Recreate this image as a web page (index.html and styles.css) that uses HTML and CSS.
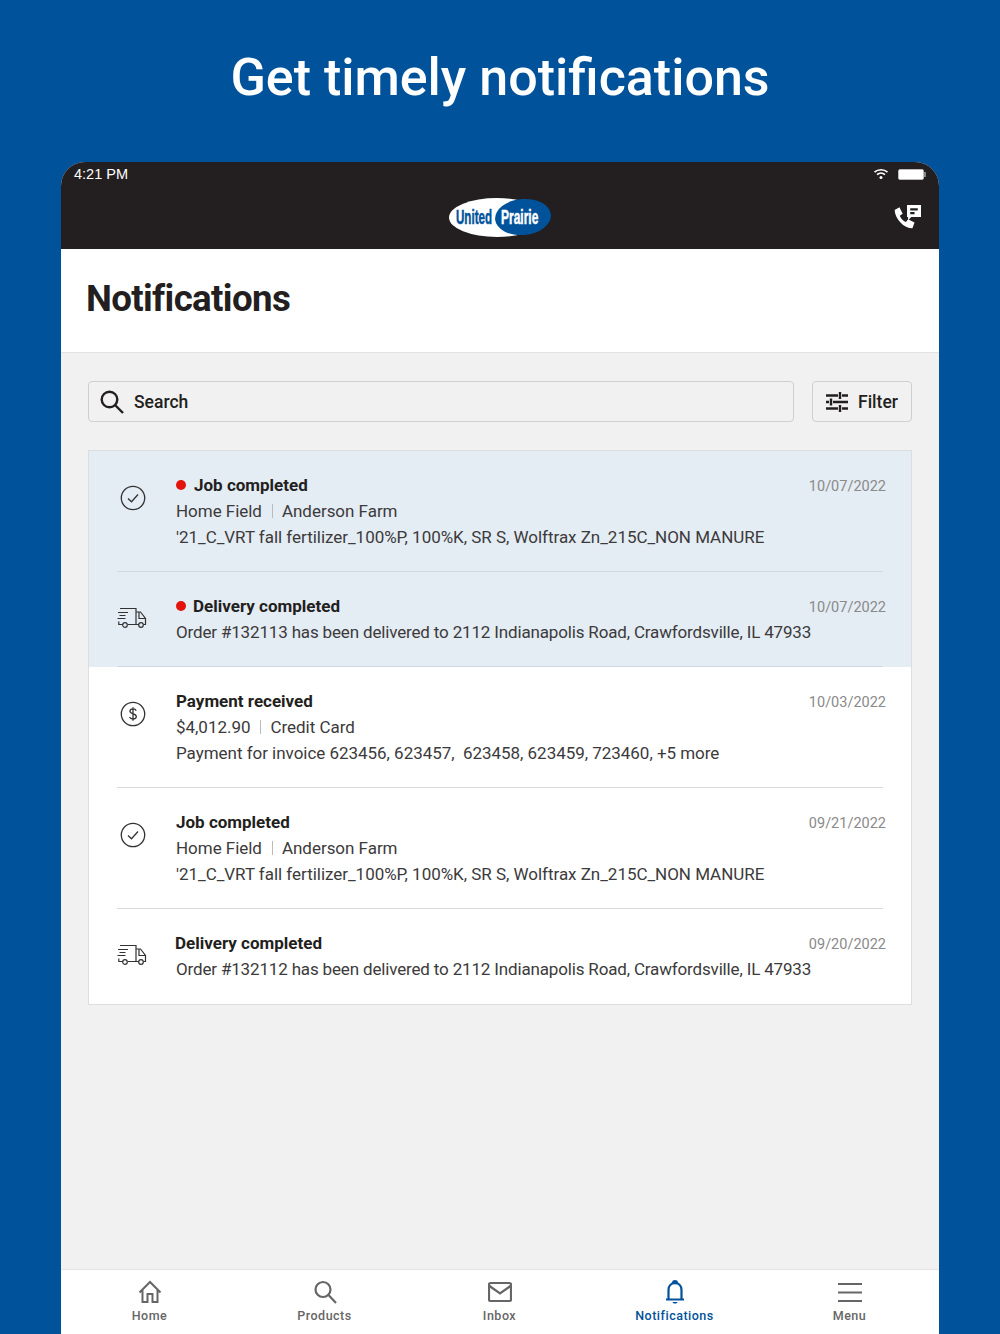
FILE: index.html
```html
<!DOCTYPE html>
<html lang="en">
<head>
    <meta charset="UTF-8">
    <meta name="viewport" content="width=device-width, initial-scale=1.0">
    <title>Notifications</title>
    <link rel="stylesheet" href="styles.css">
</head>
<body>
    <h1 class="headline">Get timely notifications</h1>
    <div class="tablet">
        <header class="topbar">
            <div class="status">
                <span class="time">4:21 PM</span>
                <div class="status-icons">
                    <svg class="wifi" width="16" height="12" viewBox="0 0 16 12" fill="none" stroke="#fff">
                        <path d="M1.5 4.2C5 .9 11 .9 14.5 4.2" stroke-width="1.6"/>
                        <path d="M4 6.6c2.3-2 5.7-2 8 0" stroke-width="1.6"/>
                        <circle cx="8" cy="9.6" r="1.5" fill="#fff" stroke="none"/>
                    </svg>
                    <div class="battery"></div>
                </div>
            </div>
            <div class="brandrow">
                <svg class="logo" width="104" height="42" viewBox="0 0 104 42">
                    <ellipse cx="49" cy="21.500" rx="48" ry="19.500" fill="#fff"/>
                    <ellipse cx="75" cy="21" rx="28" ry="18" fill="#00529b" transform="rotate(-5 75 21)"/>
                    <text transform="translate(8 28) scale(.58 1)" class="logo-text logo-blue">United</text>
                    <text transform="translate(53 28) scale(.6 1)" class="logo-text logo-white">Prairie</text>
                </svg>
                <svg class="contact" width="28" height="26" viewBox="1 1 26 24" fill="#fff">
                    <path d="M2.500 5.500 7 3l3 6-2.700 2c1 2.800 3 4.800 5.700 5.800l2-2.600 6 3-2 5.300C11 22.500 3 14 2.500 5.500z"/>
                    <path fill-rule="evenodd" d="M14 1h13v11H18l-3 3v-3h-1zM17 4v2h7V4zM17 7.500v2h4v-2z"/>
                </svg>
            </div>
        </header>

        <section class="title-band">
            <h2>Notifications</h2>
        </section>

        <main class="content">
            <div class="toolbar">
                <div class="search">
                    <svg width="26" height="26" viewBox="0 0 26 26" fill="none" stroke="#231f20" stroke-width="2.400">
                        <circle cx="10.500" cy="10.500" r="7.800"/>
                        <path d="M16 16l8 8"/>
                    </svg>
                    <span>Search</span>
                </div>
                <div class="filter">
                    <svg width="22" height="20" viewBox="0 0 22 20" fill="none" stroke="#231f20" stroke-width="2.400">
                        <path d="M0 3.500h12M16 3.500h6M14 0v7M0 10h3M7 10h15M5 6.500v7M0 16.500h12M16 16.500h6M14 13v7"/>
                    </svg>
                    <span>Filter</span>
                </div>
            </div>

            <div class="list">
                <div class="row row-new row-tall">
                    <div class="row-icon">
                        <svg class="ic" width="26" height="26" viewBox="0 0 26 26" fill="none" stroke="#333" stroke-width="1.300">
                            <circle cx="13" cy="13" r="11.700"/>
                            <path d="M8 13.500l3.500 3.300 6.500-7.300"/>
                        </svg>
                    </div>
                    <div class="row-body">
                        <div class="row-title"><i class="dot"></i>Job completed</div>
                        <div class="row-text">Home Field<span class="sep"></span>Anderson Farm</div>
                        <div class="row-text">'21_C_VRT fall fertilizer_100%P, 100%K, SR S, Wolftrax Zn_215C_NON MANURE</div>
                    </div>
                    <div class="row-date">10/07/2022</div>
                </div>
                <div class="row row-new row-delivery">
                    <div class="row-icon">
                        <svg class="ic ic-truck" width="30" height="22" viewBox="0 0 30 22" fill="none" stroke="#333" stroke-width="1.200">
                            <path d="M3 1.500h16v15.500M6 17.500H1.800v-3M11 17.500h11M19 5h4.500l5 6.500v6h-2"/>
                            <path d="M22 5v6.500h6.500M1 5.500h10M2.500 8.500h6M0.500 11.500h8"/>
                            <circle cx="8" cy="18" r="2.300"/>
                            <circle cx="24" cy="18" r="2.300"/>
                        </svg>
                    </div>
                    <div class="row-body">
                        <div class="row-title"><i class="dot"></i>Delivery completed</div>
                        <div class="row-text">Order #132113 has been delivered to 2112 Indianapolis Road, Crawfordsville, IL 47933</div>
                    </div>
                    <div class="row-date">10/07/2022</div>
                </div>
                <div class="row row-tall">
                    <div class="row-icon">
                        <svg class="ic" width="26" height="26" viewBox="0 0 26 26" fill="none" stroke="#333" stroke-width="1.300">
                            <circle cx="13" cy="13" r="11.700"/>
                            <path d="M16.200 9.800c-.5-1.300-1.600-1.900-3.200-1.900-1.800 0-3 .9-3 2.400 0 3.300 6.300 1.700 6.300 5.200 0 1.600-1.400 2.500-3.300 2.500-1.600 0-2.900-.7-3.400-2M13 6.300v13.400"/>
                        </svg>
                    </div>
                    <div class="row-body">
                        <div class="row-title">Payment received</div>
                        <div class="row-text">$4,012.90<span class="sep"></span>Credit Card</div>
                        <div class="row-text">Payment for invoice 623456, 623457,&nbsp; 623458, 623459, 723460, +5 more</div>
                    </div>
                    <div class="row-date">10/03/2022</div>
                </div>
                <div class="row row-tall">
                    <div class="row-icon">
                        <svg class="ic" width="26" height="26" viewBox="0 0 26 26" fill="none" stroke="#333" stroke-width="1.300">
                            <circle cx="13" cy="13" r="11.700"/>
                            <path d="M8 13.500l3.500 3.300 6.500-7.300"/>
                        </svg>
                    </div>
                    <div class="row-body">
                        <div class="row-title">Job completed</div>
                        <div class="row-text">Home Field<span class="sep"></span>Anderson Farm</div>
                        <div class="row-text">'21_C_VRT fall fertilizer_100%P, 100%K, SR S, Wolftrax Zn_215C_NON MANURE</div>
                    </div>
                    <div class="row-date">09/21/2022</div>
                </div>
                <div class="row row-last row-delivery">
                    <div class="row-icon">
                        <svg class="ic ic-truck" width="30" height="22" viewBox="0 0 30 22" fill="none" stroke="#333" stroke-width="1.200">
                            <path d="M3 1.500h16v15.500M6 17.500H1.800v-3M11 17.500h11M19 5h4.500l5 6.500v6h-2"/>
                            <path d="M22 5v6.500h6.500M1 5.500h10M2.500 8.500h6M0.500 11.500h8"/>
                            <circle cx="8" cy="18" r="2.300"/>
                            <circle cx="24" cy="18" r="2.300"/>
                        </svg>
                    </div>
                    <div class="row-body">
                        <div class="row-title">Delivery completed</div>
                        <div class="row-text">Order #132112 has been delivered to 2112 Indianapolis Road, Crawfordsville, IL 47933</div>
                    </div>
                    <div class="row-date">09/20/2022</div>
                </div>
            </div>
        </main>

        <nav class="tabs">
            <div class="tab">
                <svg width="24" height="24" viewBox="0 0 24 24" fill="none" stroke="#666" stroke-width="2">
                    <path d="M1.500 12.500 12 2l10.500 10.500M4.500 10v12h5v-8h5v8h5V10"/>
                </svg>
                <span>Home</span>
            </div>
            <div class="tab">
                <svg width="24" height="24" viewBox="0 0 24 24" fill="none" stroke="#666" stroke-width="2.200">
                    <circle cx="10" cy="9.500" r="7.500"/>
                    <path d="M15.500 15l7.500 8"/>
                </svg>
                <span>Products</span>
            </div>
            <div class="tab">
                <svg width="24" height="24" viewBox="0 0 24 24" fill="none" stroke="#666" stroke-width="2.200">
                    <rect x="1" y="3" width="22" height="18" rx="1.500"/>
                    <path d="M1.500 6 12 13.500 22.500 6"/>
                </svg>
                <span>Inbox</span>
            </div>
            <div class="tab tab-active">
                <svg width="24" height="24" viewBox="0 0 24 24" fill="none" stroke="#00529b" stroke-width="2.200">
                    <path d="M5.500 19V10c0-4 2.700-6.800 6.500-6.800s6.500 2.800 6.500 6.800v9M3 19.500h18"/>
                    <path d="M10 2.500c.3-1.800 3.700-1.800 4 0z" fill="#00529b"/>
                    <path d="M9.500 22h5c-.5 2-4.500 2-5 0z" fill="#00529b" stroke="none"/>
                </svg>
                <span>Notifications</span>
            </div>
            <div class="tab">
                <svg width="24" height="24" viewBox="0 0 24 24" fill="none" stroke="#666" stroke-width="2">
                    <path d="M0 4h24M0 12.500h24M0 21h24"/>
                </svg>
                <span>Menu</span>
            </div>
        </nav>
    </div>
</body>
</html>
```

FILE: styles.css
```css
* {
    box-sizing: border-box;
}
html, body {
    height: 100%;
}
body {
    margin: 0;
    background: #00529b;
    font-family: Roboto, sans-serif;
    color: #231f20;
    overflow: hidden;
}
.headline {
    margin: 0;
    height: 162px;
    padding-top: 45px;
    text-align: center;
    color: #fff;
    font-size: 52px;
    line-height: 66px;
    font-weight: 500;
}
.tablet {
    margin: 0 61px;
    height: 1172px;
    background: #f1f1f1;
    border-radius: 24px 24px 0 0;
    overflow: hidden;
    display: flex;
    flex-direction: column;
}
.topbar {
    background: #231f20;
    height: 87px;
    color: #fff;
}
.status {
    height: 24px;
    padding: 0 13px;
    display: flex;
    justify-content: space-between;
    align-items: center;
}
.time {
    font-family: "Liberation Sans", sans-serif;
    font-size: 14.5px;
}
.status-icons {
    display: flex;
    align-items: center;
    gap: 9px;
}
.battery {
    width: 26px;
    height: 11px;
    background: #fff;
    border: 1px solid #bbb;
    border-radius: 2px;
    margin-right: 2px;
    position: relative;
}
.battery:after {
    content: '';
    position: absolute;
    right: -3px;
    top: 2px;
    width: 2px;
    height: 5px;
    background: #888;
}
.brandrow {
    height: 63px;
    padding: 0 18px 0 0;
    display: flex;
    align-items: center;
    justify-content: flex-end;
    position: relative;
}
.logo {
    position: absolute;
    left: 387px;
    top: 10px;
}
.logo-text {
    font-family: "Liberation Sans", sans-serif;
    font-weight: 700;
    font-size: 20px;
    stroke-width: 0.5px;
}
.logo-blue {
    fill: #00529b;
    stroke: #00529b;
}
.logo-white {
    fill: #fff;
    stroke: #fff;
}
.title-band {
    background: #fff;
    height: 104px;
    border-bottom: 1px solid #e2e2e2;
    padding: 27px 0 0 25px;
}
.title-band h2 {
    margin: 0;
    font-size: 36.7px;
    line-height: 46px;
    font-weight: 700;
    letter-spacing: -0.65px;
}
.content {
    flex: 1;
    padding: 28px 27px 0;
}
.toolbar {
    display: flex;
    gap: 18px;
    height: 41px;
    margin-bottom: 28px;
}
.search, .filter {
    border: 1px solid #cfcfcf;
    border-radius: 4px;
    display: flex;
    align-items: center;
    font-size: 17.5px;
    font-weight: 500;
}
.search {
    flex: 1;
    padding-left: 10px;
    gap: 9px;
}
.filter {
    width: 100px;
    padding-left: 13px;
    gap: 10px;
}
.list {
    background: #fff;
    border: 1px solid #dedede;
}
.row {
    height: 95px;
    padding: 21px 25px 0 87px;
    display: flex;
    position: relative;
}
.row-tall {
    height: 121px;
}
.row:after {
    content: '';
    position: absolute;
    left: 28px;
    right: 28px;
    bottom: 0;
    height: 1px;
    background: #d9d9d9;
}
.row-last:after {
    display: none;
}
.row-new {
    background: #e4ecf4;
}
.row-new:after {
    background: #cfd8e1;
}
.row-icon {
    position: absolute;
    left: 28px;
    top: 0;
    bottom: 0;
    width: 32px;
}
.ic {
    display: block;
    margin: 34px 0 0 3px;
}
.ic-truck {
    margin: 35px 0 0 0;
}
.row-body {
    flex: 1;
    min-width: 0;
}
.row-title {
    font-size: 17px;
    line-height: 26px;
    font-weight: 700;
    display: flex;
    align-items: center;
}
.row-delivery .row-title {
    margin-left: -1px;
}
.row-delivery .dot {
    margin-left: 1px;
    margin-right: 7px;
}
.dot {
    width: 10px;
    height: 10px;
    border-radius: 50%;
    background: #e2140c;
    margin-right: 8px;
}
.row-text {
    font-size: 17px;
    line-height: 26px;
    color: #3c3a3b;
    letter-spacing: -0.03px;
    white-space: nowrap;
}
.row-delivery .row-text {
    letter-spacing: -0.16px;
}
.sep {
    display: inline-block;
    width: 1px;
    height: 14px;
    background: #bbb;
    margin: 0 9px 0 10px;
    vertical-align: -1px;
}
.row-date {
    font-size: 14.5px;
    line-height: 30px;
    color: #8a8a8a;
}
.tabs {
    height: 65px;
    background: #fff;
    border-top: 1px solid #e4e4e4;
    display: grid;
    grid-template-columns: repeat(5, 175px);
    padding-left: 1px;
}
.tab {
    display: flex;
    flex-direction: column;
    align-items: center;
    padding-top: 10px;
    color: #666;
    font-size: 12.5px;
    line-height: 16px;
    font-weight: 500;
    letter-spacing: 0.5px;
    gap: 4px;
}
.tab-active {
    color: #00529b;
}
```
